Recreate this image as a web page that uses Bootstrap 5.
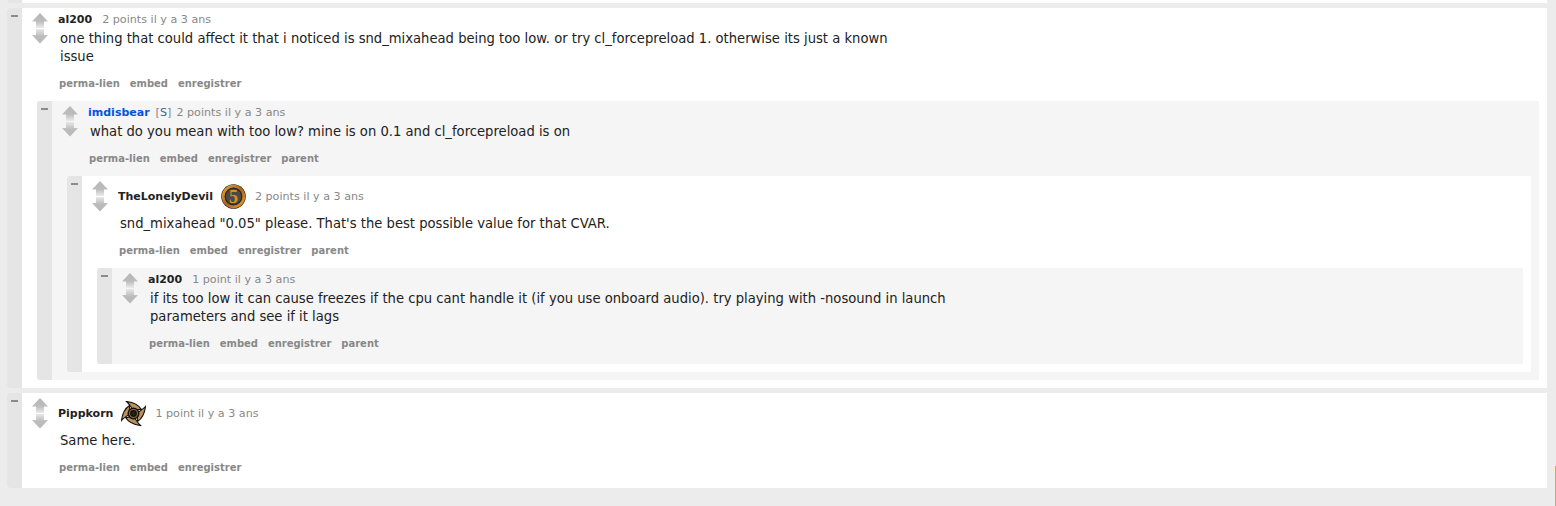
<!doctype html>
<html lang="fr">
<head>
<meta charset="utf-8">
<title>Commentaires</title>
<link href="https://cdn.jsdelivr.net/npm/bootstrap@5.3.0/dist/css/bootstrap.min.css" rel="stylesheet">
<style>
html,body{height:506px;overflow:hidden}
body{background:#ececec;font-family:"DejaVu Sans",Verdana,sans-serif;color:#222;padding:0 9px 0 7px;margin:0}
.cmt{display:flex;border-radius:3px 0 0 3px;overflow:hidden}
.cmt-white{background:#fff}
.cmt-grey{background:#f5f5f5}
.strip{height:3px;margin-bottom:5px;border-radius:0 0 0 3px}
.root-gap{margin-bottom:5px}
.gut{flex:0 0 15px;background:#e5e5e5;display:flex;justify-content:center;align-items:flex-start}
.gut i{display:block;width:7px;height:2px;background:#8c8c8c;margin-top:7px}
.cmt-main{flex:1 1 auto;min-width:0;padding:0 8px 13px 0}
.has-kids{padding-bottom:8px}
.entry{display:flex}
.votes{flex:0 0 36px;padding:5px 0 0 10px}
.votes svg{display:block}
.entry-text{padding-top:5px;min-width:0}
.meta{font-size:11.15px;line-height:14px;color:#888;white-space:nowrap;display:flex;align-items:center}
.meta b{color:#222;margin-right:10px;font-size:11px}
.meta b.sub{color:#0055df;margin-right:6px}
.meta .tag{margin-right:5px}
.meta .tag em{font-style:normal;color:#369}
.meta-flair{height:25px;margin-top:3px}
.meta-flair b{margin-right:8px}
.flair{display:block;margin-right:9px}
.body-text{font-size:13.16px;line-height:18px;color:#222;margin:3px 0 0 2px;max-width:840px}
.meta-flair + .body-text{margin-top:6px}
.acts{display:flex;gap:10px;font-size:9.98px;font-weight:700;color:#888;line-height:14px;margin:11px 0 0 1px}
.kids{padding-left:15px;margin-top:10px}
.scroll-edge{position:absolute;right:0;top:466px;width:1px;height:40px;background:#e8a92a}
</style>
</head>
<body>
<svg width="0" height="0" class="position-absolute"><defs>
 <linearGradient id="ua" x1="0" y1="0" x2="0" y2="1"><stop offset="0" stop-color="#b8b8b8"/><stop offset=".55" stop-color="#bcbcbc"/><stop offset="1" stop-color="#ebebeb"/></linearGradient>
 <linearGradient id="da" x1="0" y1="0" x2="0" y2="1"><stop offset="0" stop-color="#e8e8e8"/><stop offset=".5" stop-color="#bcbcbc"/><stop offset="1" stop-color="#b8b8b8"/></linearGradient>
 <linearGradient id="ring" x1="0" y1="0" x2="1" y2="1"><stop offset="0" stop-color="#e9a23c"/><stop offset=".5" stop-color="#a8651c"/><stop offset="1" stop-color="#e8982c"/></linearGradient>
 <g id="arrows"><path d="M8 0 16 8.500H12V15H4V8.500H0Z" fill="url(#ua)"/><path d="M4 16H12V22H16L8 30.500 0 22H4Z" fill="url(#da)"/></g>
 <g id="blade"><path d="M14 11C11 8.500 9.500 4 5.500 .5 11 1.200 17 3 20.500 8.500 18 8 15.500 9 14 11Z" fill="#b8925f" stroke="#15110c" stroke-width="1.100"/></g>
</defs></svg>

<div class="cmt cmt-white strip"><div class="gut"></div></div>

<div class="cmt cmt-white root-gap">
 <div class="gut"><i></i></div>
 <div class="cmt-main has-kids">
  <div class="entry">
   <div class="votes"><svg width="16" height="31"><use href="#arrows"/></svg></div>
   <div class="entry-text">
    <div class="meta"><b>al200</b>2 points il y a 3 ans</div>
    <p class="body-text">one thing that could affect it that i noticed is snd_mixahead being too low. or try cl_forcepreload 1. otherwise its just a known issue</p>
    <div class="acts"><span>perma-lien</span><span>embed</span><span>enregistrer</span></div>
   </div>
  </div>
  <div class="kids">
   <div class="cmt cmt-grey">
    <div class="gut"><i></i></div>
    <div class="cmt-main has-kids">
     <div class="entry">
      <div class="votes"><svg width="16" height="31"><use href="#arrows"/></svg></div>
      <div class="entry-text">
       <div class="meta"><b class="sub">imdisbear</b><span class="tag">[<em>S</em>]</span>2 points il y a 3 ans</div>
       <p class="body-text">what do you mean with too low? mine is on 0.1 and cl_forcepreload is on</p>
       <div class="acts"><span>perma-lien</span><span>embed</span><span>enregistrer</span><span>parent</span></div>
      </div>
     </div>
     <div class="kids">
      <div class="cmt cmt-white">
       <div class="gut"><i></i></div>
       <div class="cmt-main has-kids">
        <div class="entry">
         <div class="votes"><svg width="16" height="31"><use href="#arrows"/></svg></div>
         <div class="entry-text">
          <div class="meta meta-flair"><b>TheLonelyDevil</b>
           <svg class="flair" width="25" height="25" viewBox="0 0 25 25" role="img" aria-label="flair"><circle cx="12.500" cy="12.500" r="12.300" fill="#33291e"/><circle cx="12.500" cy="12.500" r="10.300" fill="none" stroke="url(#ring)" stroke-width="2.800"/><circle cx="12.500" cy="12.500" r="8.200" fill="#4b4a4a" stroke="#2a2622"/><text x="12.500" y="18.800" text-anchor="middle" font-family="Liberation Serif,serif" font-weight="700" font-size="18" fill="#dc8e26">5</text></svg>
           2 points il y a 3 ans</div>
          <p class="body-text">snd_mixahead "0.05" please. That's the best possible value for that CVAR.</p>
          <div class="acts"><span>perma-lien</span><span>embed</span><span>enregistrer</span><span>parent</span></div>
         </div>
        </div>
        <div class="kids">
         <div class="cmt cmt-grey">
          <div class="gut"><i></i></div>
          <div class="cmt-main">
           <div class="entry">
            <div class="votes"><svg width="16" height="31"><use href="#arrows"/></svg></div>
            <div class="entry-text">
             <div class="meta"><b>al200</b>1 point il y a 3 ans</div>
             <p class="body-text">if its too low it can cause freezes if the cpu cant handle it (if you use onboard audio). try playing with -nosound in launch parameters and see if it lags</p>
             <div class="acts"><span>perma-lien</span><span>embed</span><span>enregistrer</span><span>parent</span></div>
            </div>
           </div>
          </div>
         </div>
        </div>
       </div>
      </div>
     </div>
    </div>
   </div>
  </div>
 </div>
</div>

<div class="cmt cmt-white">
 <div class="gut"><i></i></div>
 <div class="cmt-main">
  <div class="entry">
   <div class="votes"><svg width="16" height="31"><use href="#arrows"/></svg></div>
   <div class="entry-text">
    <div class="meta meta-flair"><b>Pippkorn</b>
     <svg class="flair" width="25" height="25" viewBox="0 0 25 25" role="img" aria-label="flair"><use href="#blade"/><use href="#blade" transform="rotate(90 12.500 12.500)"/><use href="#blade" transform="rotate(180 12.500 12.500)"/><use href="#blade" transform="rotate(270 12.500 12.500)"/><circle cx="12.500" cy="12.500" r="6" fill="#15110c"/><circle cx="12.500" cy="12.500" r="4" fill="none" stroke="#8a6c45" stroke-width="1.200"/><rect x="10.800" y="10.800" width="3.400" height="3.400" fill="#2a2016" transform="rotate(45 12.500 12.500)"/></svg>
     1 point il y a 3 ans</div>
    <p class="body-text">Same here.</p>
    <div class="acts"><span>perma-lien</span><span>embed</span><span>enregistrer</span></div>
   </div>
  </div>
 </div>
</div>
<div class="scroll-edge"></div>
</body>
</html>
